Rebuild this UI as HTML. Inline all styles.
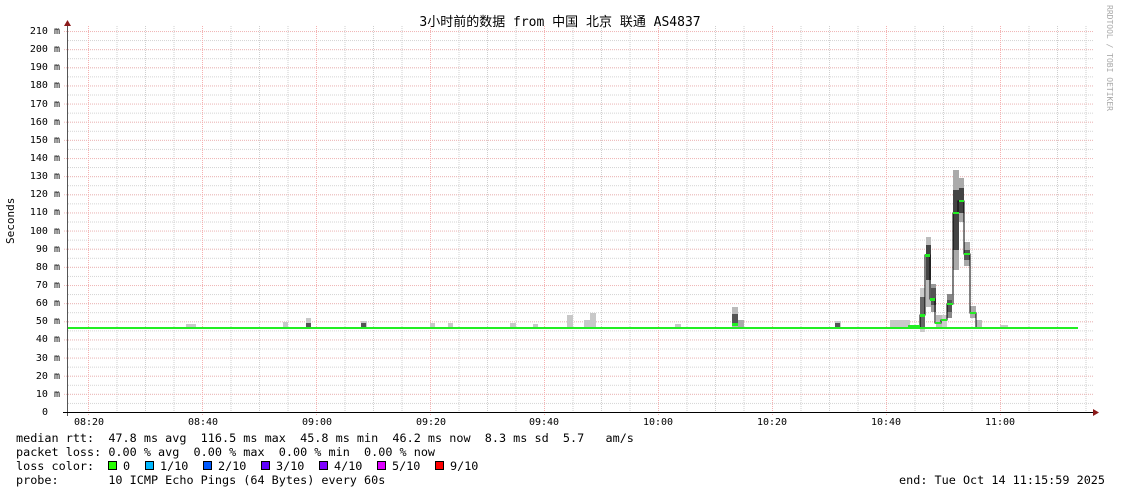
<!DOCTYPE html>
<html><head><meta charset="utf-8"><style>
html,body{margin:0;padding:0;background:#fff;}
svg{display:block;font-family:"DejaVu Sans Mono","Liberation Mono","Noto Sans CJK SC",monospace;}
</style></head><body>
<svg width="1121" height="494" viewBox="0 0 1121 494" xmlns="http://www.w3.org/2000/svg">
<defs>
<pattern id="vg" patternUnits="userSpaceOnUse" x="88" y="0" width="28.5" height="2"><rect x="0" y="0" width="1" height="1" fill="#cfcfcf"/></pattern>
<pattern id="vr" patternUnits="userSpaceOnUse" x="88" y="0" width="114" height="2"><rect x="0" y="0" width="1" height="1" fill="#f6b0b0"/></pattern>
<pattern id="hg" patternUnits="userSpaceOnUse" x="0" y="31" width="2" height="9.0714"><rect x="0" y="0" width="1" height="1" fill="#d4d4d4"/></pattern>
<pattern id="hr" patternUnits="userSpaceOnUse" x="0" y="31" width="2" height="18.1428"><rect x="0" y="0" width="1" height="1" fill="#f0b8b8"/></pattern>
</defs>
<rect x="68" y="26" width="1026" height="386" fill="url(#hg)"/>
<rect x="68" y="26" width="1026" height="386" fill="url(#vg)"/>
<rect x="63" y="26" width="1031" height="386" fill="url(#hr)"/>
<rect x="68" y="26" width="1026" height="390" fill="url(#vr)"/>

<text x="560" y="26" font-size="13" text-anchor="middle" fill="#000">3小时前的数据 from 中国 北京 联通 AS4837</text>
<text transform="translate(1107,5) rotate(90)" font-size="8" fill="#aaa">RRDTOOL / TOBI OETIKER</text>
<text transform="translate(14,244) rotate(-90)" font-size="11" fill="#000">Seconds</text>

<g font-size="10" fill="#000" text-anchor="end">
<text x="60" y="34">210 m</text><text x="60" y="52">200 m</text><text x="60" y="70">190 m</text><text x="60" y="88">180 m</text><text x="60" y="107">170 m</text><text x="60" y="125">160 m</text><text x="60" y="143">150 m</text><text x="60" y="161">140 m</text><text x="60" y="179">130 m</text><text x="60" y="197">120 m</text><text x="60" y="215">110 m</text><text x="60" y="234">100 m</text><text x="60" y="252">90 m</text><text x="60" y="270">80 m</text><text x="60" y="288">70 m</text><text x="60" y="306">60 m</text><text x="60" y="324">50 m</text><text x="60" y="342">40 m</text><text x="60" y="361">30 m</text><text x="60" y="379">20 m</text><text x="60" y="397">10 m</text><text x="48" y="415">0</text>
</g>
<g font-size="10" fill="#000" text-anchor="middle">
<text x="89" y="425">08:20</text><text x="203" y="425">08:40</text><text x="317" y="425">09:00</text><text x="431" y="425">09:20</text><text x="544" y="425">09:40</text><text x="658" y="425">10:00</text><text x="772" y="425">10:20</text><text x="886" y="425">10:40</text><text x="1000" y="425">11:00</text>
</g>

<g fill="#c8c8c8">
<rect x="186" y="324" width="10" height="5"/><rect x="283" y="322" width="5" height="7"/><rect x="306" y="318" width="5" height="10"/><rect x="361" y="321" width="6" height="7"/><rect x="430" y="323" width="5" height="5"/><rect x="448" y="323" width="5" height="5"/><rect x="510" y="323" width="6" height="5"/><rect x="533" y="324" width="5" height="4"/><rect x="567" y="315" width="6" height="13"/><rect x="584" y="320" width="6" height="8"/><rect x="590" y="313" width="6" height="15"/><rect x="675" y="324" width="6" height="4"/><rect x="835" y="321" width="6" height="7"/><rect x="890" y="320" width="20" height="8"/><rect x="1000" y="325" width="8" height="3"/>
</g>
<g fill="#555"><rect x="306" y="323" width="5" height="4"/><rect x="361" y="323" width="5" height="4"/><rect x="835" y="323" width="5" height="4"/></g>
<rect x="732" y="307" width="6" height="21" fill="#bbb"/><rect x="732" y="314" width="6" height="12" fill="#555"/><rect x="738" y="320" width="6" height="8" fill="#aaa"/>
<g>
<rect x="920" y="288" width="5" height="44" fill="#ccc"/><rect x="920" y="297" width="5" height="30" fill="#666"/>
<rect x="926" y="237" width="5" height="70" fill="#bbb"/><rect x="926" y="245" width="5" height="35" fill="#444"/>
<rect x="931" y="284" width="5" height="28" fill="#999"/><rect x="931" y="288" width="5" height="17" fill="#555"/>
<rect x="936" y="315" width="6" height="13" fill="#bbb"/>
<rect x="942" y="315" width="5" height="12" fill="#ccc"/>
<rect x="947" y="294" width="5" height="24" fill="#888"/><rect x="947" y="300" width="5" height="12" fill="#555"/>
<rect x="953" y="170" width="6" height="100" fill="#aaa"/><rect x="953" y="190" width="6" height="60" fill="#444"/>
<rect x="959" y="178" width="5" height="44" fill="#aaa"/><rect x="959" y="188" width="5" height="25" fill="#444"/>
<rect x="964" y="242" width="6" height="24" fill="#aaa"/><rect x="964" y="250" width="6" height="10" fill="#555"/>
<rect x="970" y="306" width="6" height="12" fill="#aaa"/><rect x="976" y="320" width="6" height="8" fill="#bbb"/>
</g>
<polyline fill="none" stroke="#000" stroke-width="1" points="914,328 920,328 920,315 925,315 925,255 930,255 930,299 935,299 935,323 941,323 941,320 947,320 947,304 953,304 953,213 958,213 958,201 964,201 964,254 970,254 970,313 976,313 976,328"/>
<rect x="67" y="327" width="1011" height="2" fill="#22ee22"/>
<g fill="#22ee22">
<rect x="908" y="325" width="12" height="3"/><rect x="920" y="314" width="5" height="3"/><rect x="925" y="254" width="5" height="3"/><rect x="930" y="298" width="5" height="3"/><rect x="935" y="322" width="6" height="2"/><rect x="941" y="319" width="6" height="2"/><rect x="947" y="303" width="6" height="2"/><rect x="953" y="212" width="6" height="2"/><rect x="959" y="200" width="5" height="2"/><rect x="964" y="253" width="6" height="2"/><rect x="970" y="312" width="6" height="2"/><rect x="732" y="323" width="6" height="3"/>
</g>

<line x1="67.5" y1="24" x2="67.5" y2="416" stroke="#555"/>
<line x1="63" y1="412.5" x2="1094" y2="412.5" stroke="#000"/>
<polygon points="64,26 71,26 67.5,20" fill="#8b1a1a"/>
<polygon points="1093,409 1093,416 1099,412.5" fill="#8b1a1a"/>

<g font-size="11.8" fill="#000">
<text x="16" y="442" xml:space="preserve">median rtt:  47.8 ms avg  116.5 ms max  45.8 ms min  46.2 ms now  8.3 ms sd  5.7   am/s</text>
<text x="16" y="456" xml:space="preserve">packet loss: 0.00 % avg  0.00 % max  0.00 % min  0.00 % now</text>
<text x="16" y="470" xml:space="preserve">loss color:  </text>
<text x="123" y="470">0</text><text x="160" y="470">1/10</text><text x="218" y="470">2/10</text><text x="276" y="470">3/10</text><text x="334" y="470">4/10</text><text x="392" y="470">5/10</text><text x="450" y="470">9/10</text>
<text x="16" y="484" xml:space="preserve">probe:       10 ICMP Echo Pings (64 Bytes) every 60s</text>
<text x="1105" y="484" text-anchor="end">end: Tue Oct 14 11:15:59 2025</text>
</g>
<g stroke="#000" stroke-width="1">
<rect x="108.5" y="461.5" width="8" height="8" fill="#26ff00"/>
<rect x="145.5" y="461.5" width="8" height="8" fill="#00b8ff"/>
<rect x="203.5" y="461.5" width="8" height="8" fill="#0059ff"/>
<rect x="261.5" y="461.5" width="8" height="8" fill="#5e00ff"/>
<rect x="319.5" y="461.5" width="8" height="8" fill="#7e00ff"/>
<rect x="377.5" y="461.5" width="8" height="8" fill="#dd00ff"/>
<rect x="435.5" y="461.5" width="8" height="8" fill="#ff0000"/>
</g>
</svg>
</body></html>
